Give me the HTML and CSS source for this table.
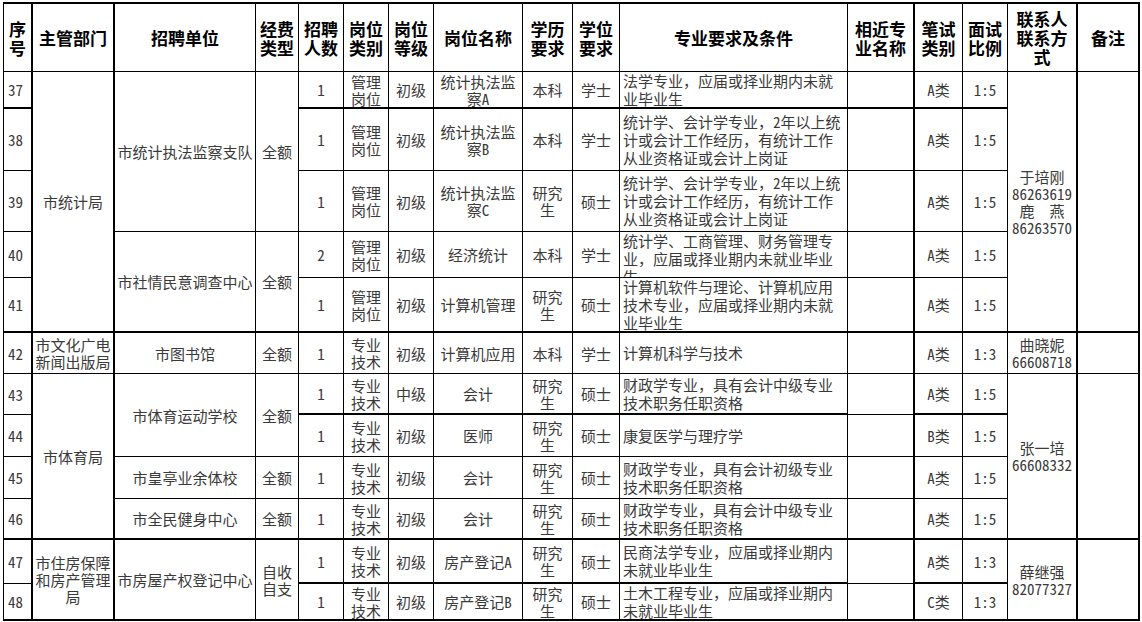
FILE: index.html
```html
<!DOCTYPE html>
<html lang="zh-CN">
<head>
<meta charset="utf-8">
<title>招聘岗位表</title>
<link rel="stylesheet" href="styles.css">
</head>
<body>
<div class="sheet">
  <!-- header -->
  <div class="h tr">序<br>号</div>
  <div class="h tr">主管部门</div>
  <div class="h">招聘单位</div>
  <div class="h">经费<br>类型</div>
  <div class="h">招聘<br>人数</div>
  <div class="h">岗位<br>类别</div>
  <div class="h">岗位<br>等级</div>
  <div class="h">岗位名称</div>
  <div class="h">学历<br>要求</div>
  <div class="h">学位<br>要求</div>
  <div class="h">专业要求及条件</div>
  <div class="h tr">相近专<br>业名称</div>
  <div class="h">笔试<br>类别</div>
  <div class="h">面试<br>比例</div>
  <div class="h tr">联系人<br>联系方<br>式</div>
  <div class="h tr">备注</div>

  <!-- 37 -->
  <div class="n tb">37</div>
  <div class="tr tb s5">市统计局</div>
  <div class="s3">市统计执法监察支队</div>
  <div class="s3">全额</div>
  <div class="tb">1</div>
  <div class="tb">管理<br>岗位</div>
  <div class="tb">初级</div>
  <div class="tb">统计执法监<br>察A</div>
  <div class="tb">本科</div>
  <div class="tb">学士</div>
  <div class="l tb">法学专业，应届或择业期内未就<br>业毕业生</div>
  <div class="tr tb"></div>
  <div class="tb">A类</div>
  <div class="tb">1:5</div>
  <div class="tr tb s5">于培刚<br>86263619<br>鹿　燕<br>86263570</div>
  <div class="tr tb s5"></div>

  <!-- 38 -->
  <div class="n">38</div>
  <div>1</div>
  <div>管理<br>岗位</div>
  <div>初级</div>
  <div>统计执法监<br>察B</div>
  <div>本科</div>
  <div>学士</div>
  <div class="l">统计学、会计学专业，2年以上统<br>计或会计工作经历，有统计工作<br>从业资格证或会计上岗证</div>
  <div class="tr"></div>
  <div>A类</div>
  <div>1:5</div>

  <!-- 39 -->
  <div class="n">39</div>
  <div>1</div>
  <div>管理<br>岗位</div>
  <div>初级</div>
  <div>统计执法监<br>察C</div>
  <div>研究<br>生</div>
  <div>硕士</div>
  <div class="l">统计学、会计学专业，2年以上统<br>计或会计工作经历，有统计工作<br>从业资格证或会计上岗证</div>
  <div class="tr"></div>
  <div>A类</div>
  <div>1:5</div>

  <!-- 40 -->
  <div class="n">40</div>
  <div class="s2 tb">市社情民意调查中心</div>
  <div class="s2 tb">全额</div>
  <div>2</div>
  <div>管理<br>岗位</div>
  <div>初级</div>
  <div>经济统计</div>
  <div>本科</div>
  <div>学士</div>
  <div class="l">统计学、工商管理、财务管理专<br>业，应届或择业期内未就业毕业<br>生</div>
  <div class="tr"></div>
  <div>A类</div>
  <div>1:5</div>

  <!-- 41 -->
  <div class="n tb">41</div>
  <div class="tb">1</div>
  <div class="tb">管理<br>岗位</div>
  <div class="tb">初级</div>
  <div class="tb">计算机管理</div>
  <div class="tb">研究<br>生</div>
  <div class="tb">硕士</div>
  <div class="l tb">计算机软件与理论、计算机应用<br>技术专业，应届或择业期内未就<br>业毕业生</div>
  <div class="tr tb"></div>
  <div class="tb">A类</div>
  <div class="tb">1:5</div>

  <!-- 42 -->
  <div class="n">42</div>
  <div class="tr">市文化广电<br>新闻出版局</div>
  <div>市图书馆</div>
  <div>全额</div>
  <div>1</div>
  <div>专业<br>技术</div>
  <div>初级</div>
  <div>计算机应用</div>
  <div>本科</div>
  <div>学士</div>
  <div class="l">计算机科学与技术</div>
  <div class="tr"></div>
  <div>A类</div>
  <div>1:3</div>
  <div class="tr">曲晓妮<br>66608718</div>
  <div class="tr"></div>

  <!-- 43 -->
  <div class="n">43</div>
  <div class="tr tb s4">市体育局</div>
  <div class="s2">市体育运动学校</div>
  <div class="s2">全额</div>
  <div class="tb">1</div>
  <div class="tb">专业<br>技术</div>
  <div class="tb">中级</div>
  <div class="tb">会计</div>
  <div class="tb">研究<br>生</div>
  <div class="tb">硕士</div>
  <div class="l tb">财政学专业，具有会计中级专业<br>技术职务任职资格</div>
  <div class="tr"></div>
  <div class="tb">A类</div>
  <div class="tb">1:5</div>
  <div class="tr tb s4">张一培<br>66608332</div>
  <div class="tr tb s4"></div>

  <!-- 44 -->
  <div class="n">44</div>
  <div>1</div>
  <div>专业<br>技术</div>
  <div>初级</div>
  <div>医师</div>
  <div>研究<br>生</div>
  <div>硕士</div>
  <div class="l">康复医学与理疗学</div>
  <div class="tr"></div>
  <div>B类</div>
  <div>1:5</div>

  <!-- 45 -->
  <div class="n">45</div>
  <div>市皇亭业余体校</div>
  <div>全额</div>
  <div>1</div>
  <div>专业<br>技术</div>
  <div>初级</div>
  <div>会计</div>
  <div>研究<br>生</div>
  <div>硕士</div>
  <div class="l">财政学专业，具有会计初级专业<br>技术职务任职资格</div>
  <div class="tr"></div>
  <div>A类</div>
  <div>1:5</div>

  <!-- 46 -->
  <div class="n tb">46</div>
  <div class="tb">市全民健身中心</div>
  <div class="tb">全额</div>
  <div class="tb">1</div>
  <div class="tb">专业<br>技术</div>
  <div class="tb">初级</div>
  <div class="tb">会计</div>
  <div class="tb">研究<br>生</div>
  <div class="tb">硕士</div>
  <div class="l tb">财政学专业，具有会计中级专业<br>技术职务任职资格</div>
  <div class="tr tb"></div>
  <div class="tb">A类</div>
  <div class="tb">1:5</div>

  <!-- 47 -->
  <div class="n">47</div>
  <div class="tr tb s2">市住房保障<br>和房产管理<br>局</div>
  <div class="tb s2">市房屋产权登记中心</div>
  <div class="tb s2">自收<br>自支</div>
  <div class="tb">1</div>
  <div class="tb">专业<br>技术</div>
  <div class="tb">初级</div>
  <div class="tb">房产登记A</div>
  <div class="tb">研究<br>生</div>
  <div class="tb">硕士</div>
  <div class="l tb">民商法学专业，应届或择业期内<br>未就业毕业生</div>
  <div class="tr"></div>
  <div class="tb">A类</div>
  <div class="tb">1:3</div>
  <div class="tr tb s2">薛继强<br>82077327</div>
  <div class="tr tb s2"></div>

  <!-- 48 -->
  <div class="n tb">48</div>
  <div class="tb">1</div>
  <div class="tb">专业<br>技术</div>
  <div class="tb">初级</div>
  <div class="tb">房产登记B</div>
  <div class="tb">研究<br>生</div>
  <div class="tb">硕士</div>
  <div class="l tb">土木工程专业，应届或择业期内<br>未就业毕业生</div>
  <div class="tr tb"></div>
  <div class="tb">C类</div>
  <div class="tb">1:3</div>
</div>
</body>
</html>
```
FILE: styles.css
```css
html, body {
  margin: 0;
  padding: 0;
  background: #fff;
}

body {
  font-family: "Noto Sans Mono CJK SC", "Noto Sans CJK SC", sans-serif;
  font-size: 15px;
  color: #3a3a3a;
}

.sheet {
  display: grid;
  grid-template-columns: 29px 82px 141px 43px 45px 45px 45px 89px 50px 47px 228px 67px 48px 45px 70px 62px;
  grid-template-rows: 68px 37px 62px 61px 46px 55px 41px 41px 42px 42px 41px 44px 37px;
  width: max-content;
  margin: 2px 0 0 3px;
  border-top: 2px solid #000;
  border-left: 1px solid #000;
}

.sheet > div {
  box-sizing: border-box;
  min-width: 0;
  min-height: 0;
  border-right: 1px solid #000;
  border-bottom: 1px solid #000;
  display: flex;
  align-items: safe center;
  justify-content: center;
  text-align: center;
  white-space: nowrap;
  overflow: hidden;
  line-height: 17px;
}

.sheet > .h {
  font-family: "Noto Sans CJK SC", sans-serif;
  font-weight: 700;
  font-size: 17px;
  line-height: 19px;
  color: #000;
}

.sheet > .n {
  justify-content: flex-start;
  padding-left: 4px;
  border-right-width: 2px;
}

.sheet > .l {
  justify-content: flex-start;
  text-align: left;
  padding-left: 3px;
  line-height: 18px;
}

.sheet > .tr {
  border-right-width: 2px;
}

.sheet > .tb {
  border-bottom-width: 2px;
}

.s2 { grid-row: span 2; }
.s3 { grid-row: span 3; }
.s4 { grid-row: span 4; }
.s5 { grid-row: span 5; }
```
